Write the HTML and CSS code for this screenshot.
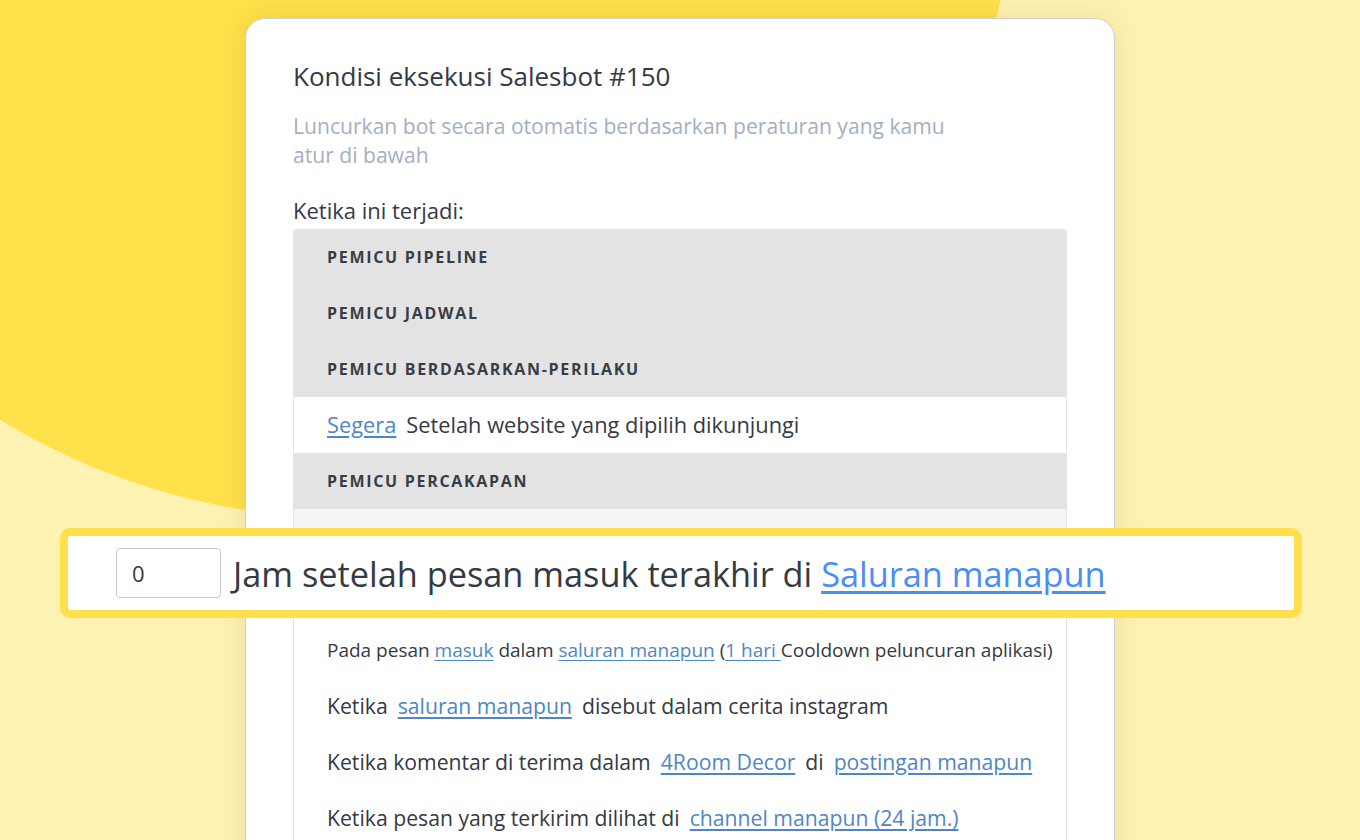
FILE: index.html
```html
<!DOCTYPE html>
<html lang="id">
<head>
    <meta charset="UTF-8">
    <title>Kondisi eksekusi Salesbot</title>
    <link rel="stylesheet" href="styles.css">
</head>
<body>

<!--latar lingkaran kuning-->
<div class="blob"></div>

<div class="card">
    <h2 class="card-title">Kondisi eksekusi Salesbot #150</h2>
    <p class="card-sub">Luncurkan bot secara otomatis berdasarkan peraturan yang kamu atur di bawah</p>
    <div class="label">Ketika ini terjadi:</div>

    <div class="triggers">
        <div class="row head">Pemicu pipeline</div>
        <div class="row head">Pemicu jadwal</div>
        <div class="row head">Pemicu berdasarkan-perilaku</div>
        <div class="row"><a href="#">Segera</a><span class="gap"></span>Setelah website yang dipilih dikunjungi</div>
        <div class="row head">Pemicu percakapan</div>
        <div class="row soft"></div>
        <div class="row spacer"></div>
        <div class="row small">Pada pesan <a href="#">masuk</a> dalam <a href="#">saluran manapun</a> (<a href="#">1 hari </a>Cooldown peluncuran aplikasi)</div>
        <div class="row plain">Ketika<span class="gap"></span><a href="#">saluran manapun</a><span class="gap"></span>disebut dalam cerita instagram</div>
        <div class="row plain">Ketika komentar di terima dalam<span class="gap"></span><a href="#">4Room Decor</a><span class="gap"></span>di<span class="gap"></span><a href="#">postingan manapun</a></div>
        <div class="row plain">Ketika pesan yang terkirim dilihat di<span class="gap"></span><a href="#">channel manapun (24 jam.)</a></div>
    </div>
</div>

<!--baris yang disorot-->
<div class="spotlight">
    <input class="hours" type="text" value="0">
    <span>Jam setelah pesan masuk terakhir di <a href="#">Saluran manapun</a></span>
</div>

</body>
</html>
```

FILE: styles.css
```css
 html, body {
     margin: 0;
     height: 840px;
     overflow: hidden;
 }
 body {
     position: relative;
     font-family: "Open Sans", "Noto Sans", sans-serif;
     background-color: #fef2b3;
     color: #343a44;
 }
 .blob {
     position: absolute;
     left: -320px;
     top: -820px;
     width: 1338px;
     height: 1338px;
     border-radius: 50%;
     background-color: #ffe14b;
 }
 .card {
     position: relative;
     box-sizing: border-box;
     width: 870px;
     margin: 18px 0 0 245px;
     padding: 41px 47px 0;
     height: 900px;
     background-color: white;
     border: 1px solid #cfcfcf;
     border-radius: 20px;
     box-shadow: 0 0 28px rgba(120, 100, 0, 0.14);
 }
 .card-title {
     margin: 0;
     font-size: 26px;
     font-weight: normal;
     line-height: 32px;
 }
 .card-sub {
     margin: 19px 0 0;
     max-width: 690px;
     font-size: 21.1px;
     line-height: 29px;
     color: #a3b0c1;
 }
 .label {
     margin: 27px 0 5px;
     font-size: 22px;
     line-height: 28px;
 }
 .triggers {
     border: 1px solid #e4e4e4;
     border-top: none;
     border-radius: 4px 4px 0 0;
     overflow: hidden;
 }
 .row {
     height: 56px;
     line-height: 56px;
     padding-left: 33px;
     font-size: 21.8px;
     white-space: nowrap;
     background-color: white;
 }
 .row.head {
     background-color: #e3e3e3;
     font-size: 16px;
     font-weight: bold;
     letter-spacing: 1.7px;
     text-transform: uppercase;
     color: #383d46;
 }
 .row.soft {
     background-color: #f4f4f4;
 }
 .row.spacer {
     height: 57px;
 }
 .row.small {
     font-size: 19px;
 }
 .row.plain {
     font-size: 21.2px;
 }
 .row a {
     color: #4f86c6;
     text-decoration: underline;
     text-underline-offset: 3px;
 }
 .gap {
     display: inline-block;
     width: 10px;
 }
 .spotlight {
     position: absolute;
     left: 60px;
     top: 528px;
     box-sizing: border-box;
     width: 1242px;
     height: 90px;
     display: flex;
     align-items: center;
     gap: 12px;
     padding-left: 48px;
     background-color: white;
     border: 8px solid #ffe04a;
     border-radius: 10px;
     font-size: 34.3px;
     color: #343a44;
 }
 .spotlight a {
     color: #4a8ef3;
     text-underline-offset: 4px;
 }
 .hours {
     box-sizing: border-box;
     width: 105px;
     height: 50px;
     padding: 0 15px;
     border: 1px solid #c9c9c9;
     border-radius: 4px;
     font-family: "Open Sans", "Noto Sans", sans-serif;
     font-size: 22px;
     color: #343a44;
 }
```
